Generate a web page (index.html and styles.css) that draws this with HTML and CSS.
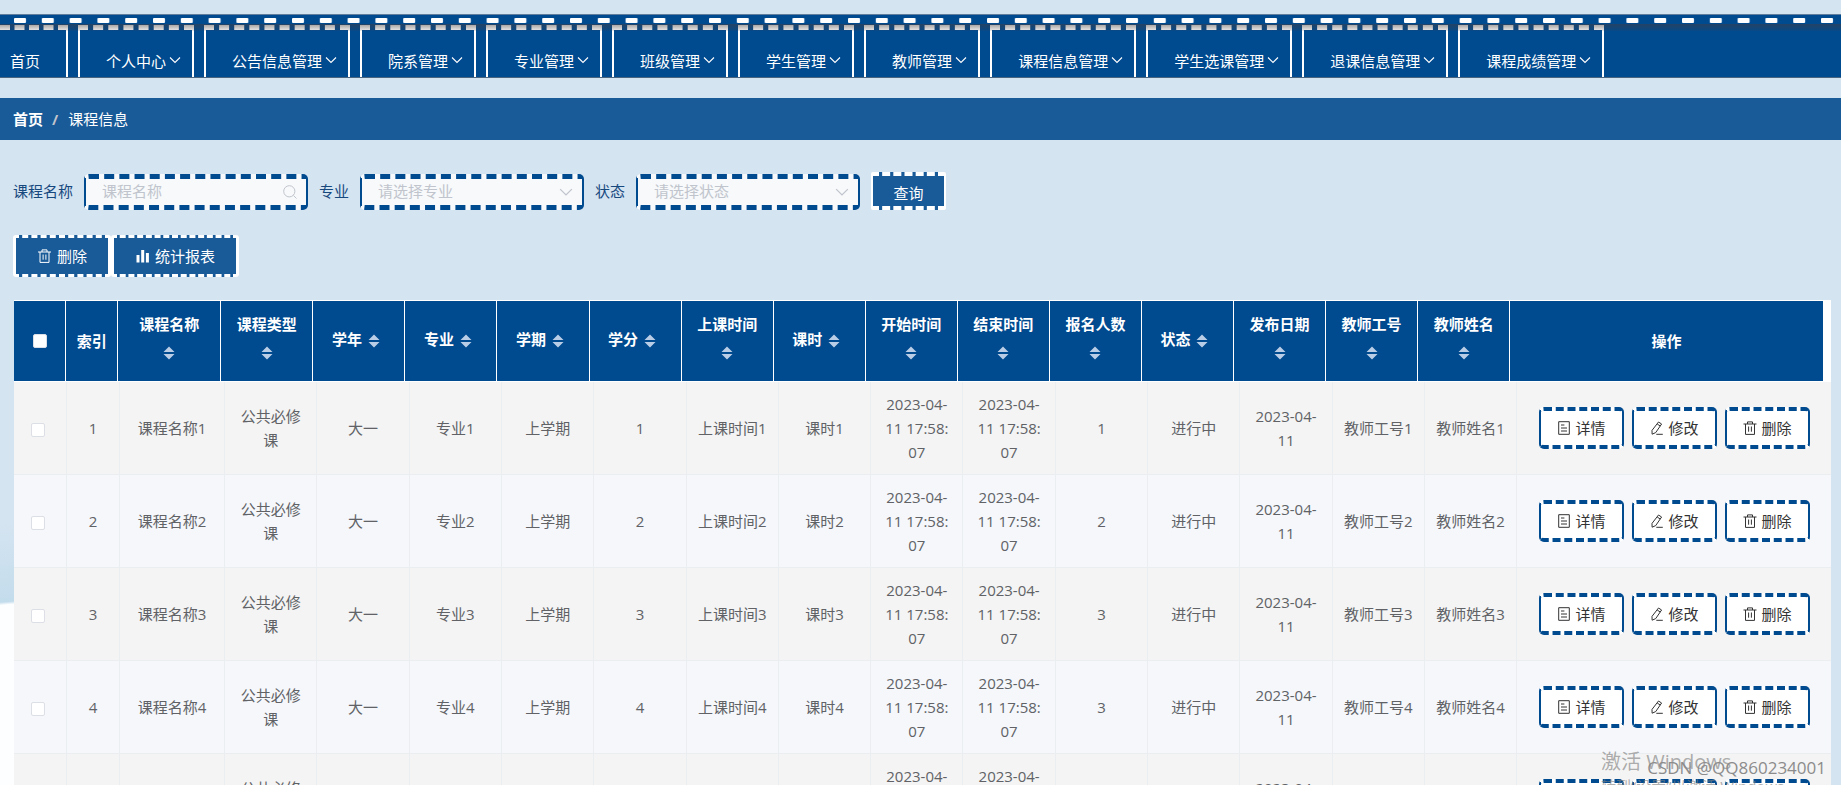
FILE: index.html
```
<!DOCTYPE html>
<html lang="zh-CN">
<head>
<meta charset="utf-8">
<title>课程信息</title>
<link rel="stylesheet" href="styles.css">
</head>
<body>
<svg class="sprite" aria-hidden="true">
  <symbol id="i-down" viewBox="0 0 12 12"><path d="M1 3.5l5 5 5-5" fill="none" stroke="currentColor" stroke-width="1.1"/></symbol>
  <symbol id="i-search" viewBox="0 0 14 14"><circle cx="6.3" cy="6.3" r="5.6" fill="none" stroke="currentColor"/><path d="M10.5 10.5l3 3" stroke="currentColor"/></symbol>
  <symbol id="i-trash" viewBox="0 0 14 14"><path d="M.5 3h13M2.5 3v10.4h9V3M4.5 3V.9h5V3M5.6 5.5v5.2M8.4 5.5v5.2" fill="none" stroke="currentColor"/></symbol>
  <symbol id="i-chart" viewBox="0 0 14 14"><path d="M1 6h3v7.5H1zM5.7 1h3v12.5h-3zM10.4 4h3v9.5h-3z" fill="currentColor"/></symbol>
  <symbol id="i-doc" viewBox="0 0 14 14"><path d="M1.7.7h10.6v12.6H1.7zM4 4h3.4M4 7h6M4 10h6" fill="none" stroke="currentColor"/></symbol>
  <symbol id="i-edit" viewBox="0 0 14 14"><path d="M8.5 1l3.1 2-5.9 8.6-3.6 1.6-.1-3.8zM7.2 3l3 2M6.3 13.3h6.5" fill="none" stroke="currentColor" stroke-linejoin="round"/></symbol>
  <symbol id="i-sort" viewBox="0 0 24 14"><path d="M6.5 6L12 .4 17.500 6zM6.500 8h11L12 13.600z" fill="#b9cde6"/></symbol>
</svg>

<nav class="nav">
  <svg class="film" aria-hidden="true">
    <defs><pattern id="holes" x="14" y="0" width="27.8" height="11" patternUnits="userSpaceOnUse"><rect x="0" y="3" width="12" height="5" rx="1" fill="#fff"/></pattern></defs>
    <rect width="100%" height="11" fill="url(#holes)"/>
  </svg>
  <div class="tabs">
    <a class="tab home" href="#">首页</a>
    <a class="tab" href="#">个人中心<svg class="chev"><use href="#i-down"/></svg></a>
    <a class="tab" href="#">公告信息管理<svg class="chev"><use href="#i-down"/></svg></a>
    <a class="tab" href="#">院系管理<svg class="chev"><use href="#i-down"/></svg></a>
    <a class="tab" href="#">专业管理<svg class="chev"><use href="#i-down"/></svg></a>
    <a class="tab" href="#">班级管理<svg class="chev"><use href="#i-down"/></svg></a>
    <a class="tab" href="#">学生管理<svg class="chev"><use href="#i-down"/></svg></a>
    <a class="tab" href="#">教师管理<svg class="chev"><use href="#i-down"/></svg></a>
    <a class="tab" href="#">课程信息管理<svg class="chev"><use href="#i-down"/></svg></a>
    <a class="tab" href="#">学生选课管理<svg class="chev"><use href="#i-down"/></svg></a>
    <a class="tab" href="#">退课信息管理<svg class="chev"><use href="#i-down"/></svg></a>
    <a class="tab" href="#">课程成绩管理<svg class="chev"><use href="#i-down"/></svg></a>
  </div>
</nav>

<div class="crumbs"><a href="#">首页</a><span class="sep">/</span><span>课程信息</span></div>

<main class="main">
  <form class="filters">
    <label for="f-name">课程名称</label>
    <span class="field"><input id="f-name" type="text" placeholder="课程名称"><svg class="f-icon"><use href="#i-search"/></svg></span>
    <label for="f-major">专业</label>
    <span class="field"><select id="f-major"><option>请选择专业</option></select><svg class="f-icon"><use href="#i-down"/></svg></span>
    <label for="f-state">状态</label>
    <span class="field"><select id="f-state"><option>请选择状态</option></select><svg class="f-icon"><use href="#i-down"/></svg></span>
    <button class="query" type="button">查询</button>
  </form>

  <div class="actions">
    <button class="act" type="button"><svg><use href="#i-trash"/></svg>删除</button>
    <button class="act" type="button"><svg><use href="#i-chart"/></svg>统计报表</button>
  </div>

  <div class="grid">
    <div class="grid-head">
      <table>
        <colgroup><col class="c-s" span="2"><col class="c-n"><col class="c-m" span="14"><col></colgroup>
        <thead><tr>
          <th><input type="checkbox" aria-label="全选"></th>
          <th>索引</th>
          <th>课程名称<svg class="sort"><use href="#i-sort"/></svg></th>
          <th>课程类型<svg class="sort"><use href="#i-sort"/></svg></th>
          <th>学年<svg class="sort"><use href="#i-sort"/></svg></th>
          <th>专业<svg class="sort"><use href="#i-sort"/></svg></th>
          <th>学期<svg class="sort"><use href="#i-sort"/></svg></th>
          <th>学分<svg class="sort"><use href="#i-sort"/></svg></th>
          <th>上课时间<svg class="sort"><use href="#i-sort"/></svg></th>
          <th>课时<svg class="sort"><use href="#i-sort"/></svg></th>
          <th>开始时间<svg class="sort"><use href="#i-sort"/></svg></th>
          <th>结束时间<svg class="sort"><use href="#i-sort"/></svg></th>
          <th>报名人数<svg class="sort"><use href="#i-sort"/></svg></th>
          <th>状态<svg class="sort"><use href="#i-sort"/></svg></th>
          <th>发布日期<svg class="sort"><use href="#i-sort"/></svg></th>
          <th>教师工号<svg class="sort"><use href="#i-sort"/></svg></th>
          <th>教师姓名<svg class="sort"><use href="#i-sort"/></svg></th>
          <th>操作</th>
        </tr></thead>
      </table>
    </div>
    <table class="rows">
      <colgroup><col class="c-s" span="2"><col class="c-n"><col class="c-m" span="14"><col></colgroup>
      <tbody>
        <tr><td><input type="checkbox" aria-label="选择第1行"></td><td>1</td><td>课程名称1</td><td>公共必修课</td><td>大一</td><td>专业1</td><td>上学期</td><td>1</td><td>上课时间1</td><td>课时1</td><td>2023-04-11 17:58:<wbr>07</td><td>2023-04-11 17:58:<wbr>07</td><td>1</td><td>进行中</td><td>2023-04-11</td><td>教师工号1</td><td>教师姓名1</td>
          <td><div class="ops"><button type="button"><svg><use href="#i-doc"/></svg>详情</button><button type="button"><svg><use href="#i-edit"/></svg>修改</button><button type="button"><svg><use href="#i-trash"/></svg>删除</button></div></td></tr>
        <tr><td><input type="checkbox" aria-label="选择第2行"></td><td>2</td><td>课程名称2</td><td>公共必修课</td><td>大一</td><td>专业2</td><td>上学期</td><td>2</td><td>上课时间2</td><td>课时2</td><td>2023-04-11 17:58:<wbr>07</td><td>2023-04-11 17:58:<wbr>07</td><td>2</td><td>进行中</td><td>2023-04-11</td><td>教师工号2</td><td>教师姓名2</td>
          <td><div class="ops"><button type="button"><svg><use href="#i-doc"/></svg>详情</button><button type="button"><svg><use href="#i-edit"/></svg>修改</button><button type="button"><svg><use href="#i-trash"/></svg>删除</button></div></td></tr>
        <tr><td><input type="checkbox" aria-label="选择第3行"></td><td>3</td><td>课程名称3</td><td>公共必修课</td><td>大一</td><td>专业3</td><td>上学期</td><td>3</td><td>上课时间3</td><td>课时3</td><td>2023-04-11 17:58:<wbr>07</td><td>2023-04-11 17:58:<wbr>07</td><td>3</td><td>进行中</td><td>2023-04-11</td><td>教师工号3</td><td>教师姓名3</td>
          <td><div class="ops"><button type="button"><svg><use href="#i-doc"/></svg>详情</button><button type="button"><svg><use href="#i-edit"/></svg>修改</button><button type="button"><svg><use href="#i-trash"/></svg>删除</button></div></td></tr>
        <tr><td><input type="checkbox" aria-label="选择第4行"></td><td>4</td><td>课程名称4</td><td>公共必修课</td><td>大一</td><td>专业4</td><td>上学期</td><td>4</td><td>上课时间4</td><td>课时4</td><td>2023-04-11 17:58:<wbr>07</td><td>2023-04-11 17:58:<wbr>07</td><td>3</td><td>进行中</td><td>2023-04-11</td><td>教师工号4</td><td>教师姓名4</td>
          <td><div class="ops"><button type="button"><svg><use href="#i-doc"/></svg>详情</button><button type="button"><svg><use href="#i-edit"/></svg>修改</button><button type="button"><svg><use href="#i-trash"/></svg>删除</button></div></td></tr>
        <tr><td><input type="checkbox" aria-label="选择第5行"></td><td>5</td><td>课程名称5</td><td>公共必修课</td><td>大一</td><td>专业5</td><td>上学期</td><td>5</td><td>上课时间5</td><td>课时5</td><td>2023-04-11 17:58:<wbr>07</td><td>2023-04-11 17:58:<wbr>07</td><td>5</td><td>进行中</td><td>2023-04-11</td><td>教师工号5</td><td>教师姓名5</td>
          <td><div class="ops"><button type="button"><svg><use href="#i-doc"/></svg>详情</button><button type="button"><svg><use href="#i-edit"/></svg>修改</button><button type="button"><svg><use href="#i-trash"/></svg>删除</button></div></td></tr>
      </tbody>
    </table>
  </div>
</main>

<div class="activate"><div class="activate-title">激活 Windows</div><div>转到“设置”以激活 Windows。</div></div>
<div class="credit">CSDN @QQ860234001</div>
</body>
</html>
```
FILE: styles.css
```
* { box-sizing: border-box; }

body {
  position: relative;
  height: 100vh;
  margin: 0;
  padding-top: 14px;
  overflow: hidden;
  color: #606266;
  font: 15px/24px "Open Sans", "Noto Sans CJK SC", sans-serif;
  background:
    linear-gradient(175deg, #d5e4f100 520px, #c3dcec 600px, #fdfeff 603px) left top / 14px 100% no-repeat,
    #d5e4f1;
}

a { color: inherit; text-decoration: none; }
button, input, select { font: inherit; }
.sprite { display: none; }

/* Navigation */
.nav {
  position: relative;
  height: 64px;
  border-top: 1px solid #5f7f9c;
  border-bottom: 1px solid #4a6580;
  background: #004a8f;
}
.nav::after {
  content: "";
  position: absolute;
  inset: 9px 0 auto;
  height: 7px;
  background: linear-gradient(rgba(70, 60, 60, .5), rgba(70, 60, 60, .1));
}
.film { display: block; width: 100%; height: 10px; }
.tabs { display: flex; gap: 10px; height: 52px; color: #fff; }
.tab {
  display: flex;
  align-items: center;
  gap: 3px;
  padding: 15px 11px 0 26px;
  border: 2px solid #fff;
  border-top: 5px dashed #fff;
  border-bottom: 0;
  white-space: nowrap;
}
.tab.home { padding: 15px 26px 0 10px; border-left: 0; }
.chev { width: 12px; height: 12px; margin-bottom: 2px; }

/* Breadcrumb */
.crumbs {
  display: flex;
  align-items: center;
  height: 42px;
  margin-top: 20px;
  padding: 0 13px;
  color: #fff;
  background: #195a98;
}
.crumbs a { font-weight: 700; }
.sep { margin: 0 10px 0 9px; color: #c0c4cc; font-weight: 700; }

.main { padding: 32px 10px 0 13px; }

/* Filters */
.filters { display: flex; align-items: center; gap: 11px; color: #17497f; }
.filters label { line-height: 36px; }
.field { position: relative; width: 224px; height: 36px; margin-top: 2px; }
.field input, .field select {
  display: block;
  width: 100%;
  height: 36px;
  padding: 0 16px 2px;
  border: 2px solid #004a8f;
  border-width: 5px 2px;
  border-style: dashed solid;
  border-radius: 5px;
  outline: 0;
  color: #c0c4cc;
  background: #f7f9fb;
  appearance: none;
}
.field input::placeholder { color: #c0c4cc; opacity: 1; }
.f-icon {
  position: absolute;
  top: 11px;
  right: 11px;
  width: 14px;
  height: 14px;
  color: #c0c4cc;
  pointer-events: none;
}
.query {
  width: 75px;
  height: 38px;
  padding: 4px 0 0;
  border: 2px solid #fff;
  border-width: 4px 2px;
  border-style: dashed solid;
  border-radius: 2px;
  color: #fff;
  background: #195a98;
}

/* Toolbar */
.actions { display: flex; margin-top: 25px; }
.act {
  display: flex;
  align-items: center;
  gap: 5px;
  height: 42px;
  padding: 0 21px;
  border: 3px solid #fff;
  border-style: dashed solid;
  border-radius: 3px;
  color: #fff;
  background: #195a98;
}
.act svg { width: 15px; height: 14px; }

/* Table */
.grid { margin: 23px 0 0 1px; border-top: 1px solid #fff; background: #fff; }
.grid-head { padding-right: 8px; border-bottom: 1px solid #fff; }
table { width: 100%; border-spacing: 0; table-layout: fixed; }
.c-s { width: 2.88%; }
.c-n { width: 5.7%; }
.c-m { width: 5.09%; }
.rows .c-s { width: 2.92%; }
.rows .c-n { width: 5.78%; }
.rows .c-m { width: 5.08%; }
th, td { text-align: center; vertical-align: middle; }
th {
  height: 80px;
  padding: 0 10px;
  border-right: 1px solid #fff;
  color: #fff;
  background: #004a8f;
}
th:last-child { border-right: 0; }
.sort { width: 24px; height: 34px; padding: 10px 0; vertical-align: middle; }
td {
  height: 93px;
  padding: 10px;
  border: 1px solid #ebeef0;
  border-width: 0 1px 1px 0;
  background: #f4f4f4;
}
th:nth-child(-n+2), td:nth-child(-n+2) { padding-left: 0; padding-right: 0; }
tr:nth-child(even) td { background: #f5f7fb; }
input[type="checkbox"] {
  display: block;
  width: 14px;
  height: 14px;
  margin: 0 auto;
  border: 1px solid #dcdfe6;
  border-radius: 2px;
  background: #fff;
  appearance: none;
}
td:first-child { padding: 12px 4px 8px 0; }
td:last-child { border-right: 0; }
.ops { display: flex; justify-content: center; gap: 8px; }
.ops button {
  display: flex;
  align-items: center;
  justify-content: center;
  gap: 5px;
  width: 85px;
  height: 42px;
  padding: 0;
  border: 2px solid #004a8f;
  border-width: 4px 2px;
  border-style: dashed solid;
  border-radius: 5px;
  color: #333;
  background: #fff;
}
.ops svg { width: 14px; height: 14px; }

/* Overlaid marks */
.activate {
  position: absolute;
  left: calc(100% - 240px);
  top: calc(100vh - 35px);
  color: rgba(130, 130, 130, .65);
  white-space: nowrap;
}
.activate-title { font-size: 20px; line-height: 24px; }
.credit {
  position: absolute;
  right: 15px;
  bottom: 5px;
  color: #8c8c8c;
  font-size: 17px;
}
```
